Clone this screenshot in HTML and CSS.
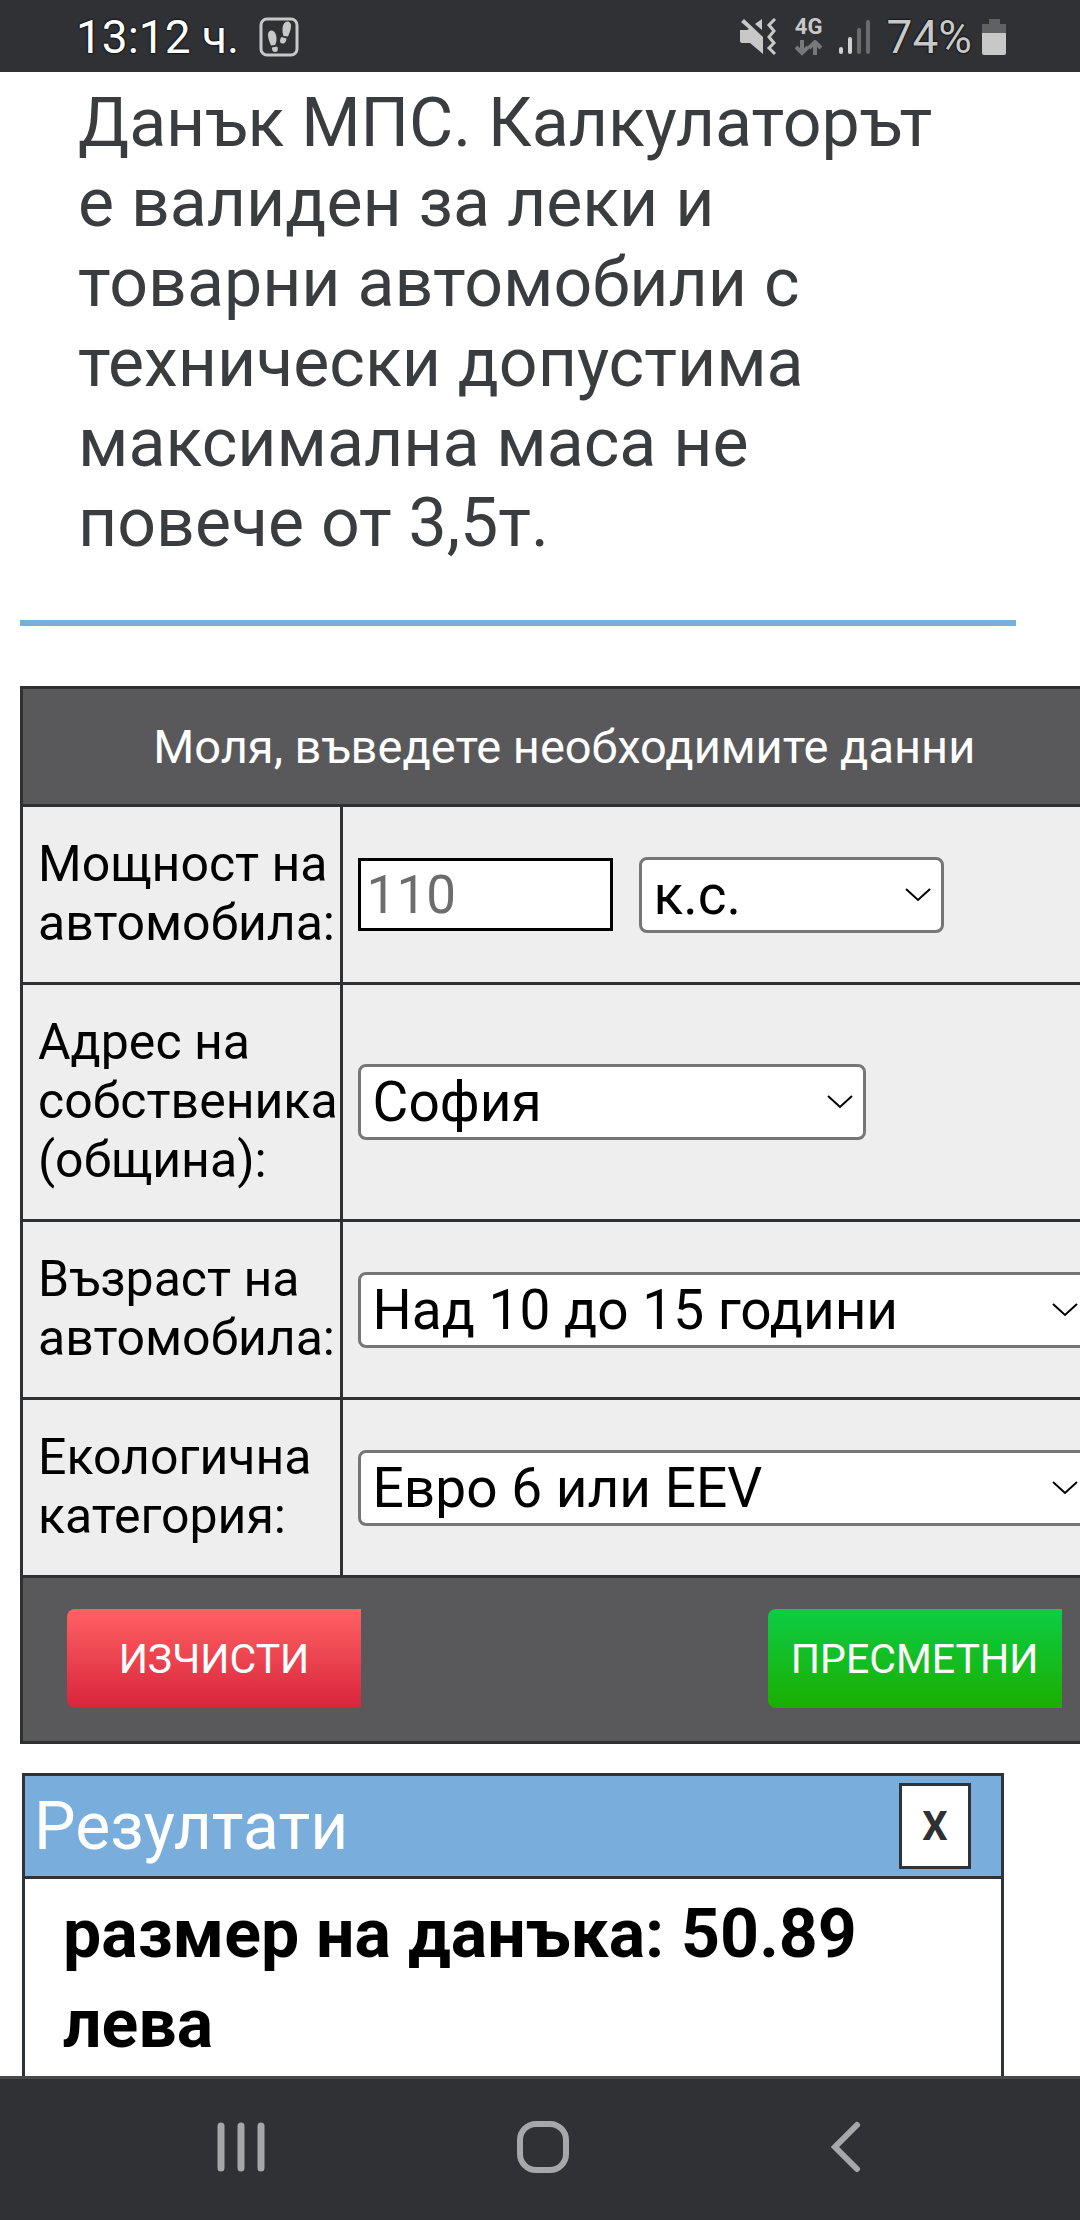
FILE: index.html
```html
<!DOCTYPE html>
<html lang="bg">
<head>
    <meta charset="UTF-8">
    <meta name="viewport" content="width=device-width, initial-scale=1.0">
    <title>Данък МПС</title>
    <link rel="stylesheet" href="styles.css">
</head>
<body>
    <header class="status-bar">
        <span class="clock">13:12 ч.</span>
        <svg class="steps-icon" width="40" height="40" viewBox="0 0 40 40">
            <rect x="2" y="2" width="36" height="36" rx="6" fill="none" stroke="#c8c8c8" stroke-width="3"/>
            <g fill="#c8c8c8">
                <path d="M9 18c0-3 1.500-4.500 3.500-4.500 3.200 0 5 4 5 8 0 3-.5 5-1.500 6.500l-4 .5c-1-3-3-6.500-3-10.500z"/>
                <path d="M13 30.500l5-1c1.500 2.500 1 5-1.500 5.500-2.500.4-3.800-2-3.500-4.500z"/>
                <path d="M32 9c0-3-1.500-4.500-3.500-4.500-3.200 0-5 4-5 8 0 3 .3 4.500 1 6.500l4.500.5c1-3 3-6.500 3-10.500z"/>
                <path d="M22.500 20l5 1.500c0 3-2 5.500-4.500 5-2.500-.5-2.500-4-.5-6.500z"/>
            </g>
        </svg>
        <div class="indicators">
            <svg width="38" height="38" viewBox="0 0 38 38">
                <path d="M1 12h7l2-1L2 4l3-3 19 18v17L11 25H3q-2 0-2-2z" fill="#c8c8c8"/>
                <path d="M23 1v11l-7-6z" fill="#c8c8c8"/>
                <path d="M36 1l-6 6 5 6-5 6 5 6-5 5 6 6" fill="none" stroke="#c8c8c8" stroke-width="3"/>
            </svg>
            <div class="network">
                <span>4G</span>
                <svg width="28" height="16" viewBox="0 0 28 16" fill="none" stroke="#77787a" stroke-width="4">
                    <path d="M7 0v13M1 7l6 6 6-6M20 15V3M14 8l6-6 6 6"/>
                </svg>
            </div>
            <svg width="32" height="36" viewBox="0 0 32 36" stroke-width="4" stroke-linecap="round">
                <path d="M2 30v3M11 20v13" stroke="#d0d0d0"/>
                <path d="M20 11v22M29 3v30" stroke="#6a6b6d"/>
            </svg>
            <span class="percent">74%</span>
            <svg width="24" height="36" viewBox="0 0 24 36">
                <path d="M7 0h11v5h6v9H0V5h7z" fill="#606163"/>
                <path d="M0 14h24v20q0 2-2 2H2q-2 0-2-2z" fill="#c8c8c8"/>
            </svg>
        </div>
    </header>

    <main class="content">
        <h1>Данък МПС. Калкулаторът е валиден за леки и товарни автомобили с технически допустима максимална маса не повече от 3,5т.</h1>

        <form>
            <table class="calculator">
                <thead>
                    <tr>
                        <th colspan="2">Моля, въведете необходимите данни</th>
                    </tr>
                </thead>
                <tbody>
                    <tr>
                        <td class="name"><label for="power">Мощност на<br>автомобила:</label></td>
                        <td>
                            <div class="fields">
                                <input type="text" id="power" class="power" placeholder="110">
                                <select class="unit" aria-label="Мерна единица">
                                    <option>к.с.</option>
                                    <option>kW</option>
                                </select>
                            </div>
                        </td>
                    </tr>
                    <tr>
                        <td class="name"><label for="city">Адрес на<br>собственика<br>(община):</label></td>
                        <td>
                            <select id="city" class="city">
                                <option>София</option>
                            </select>
                        </td>
                    </tr>
                    <tr>
                        <td class="name"><label for="age">Възраст на<br>автомобила:</label></td>
                        <td>
                            <select id="age" class="wide">
                                <option>Над 10 до 15 години</option>
                            </select>
                        </td>
                    </tr>
                    <tr>
                        <td class="name"><label for="eco">Екологична<br>категория:</label></td>
                        <td>
                            <select id="eco" class="wide">
                                <option>Евро 6 или EEV</option>
                            </select>
                        </td>
                    </tr>
                </tbody>
                <tfoot>
                    <tr>
                        <td colspan="2">
                            <div class="actions">
                                <button type="reset" class="clear">ИЗЧИСТИ</button>
                                <button type="button" class="calculate">ПРЕСМЕТНИ</button>
                            </div>
                        </td>
                    </tr>
                </tfoot>
            </table>
        </form>

        <section class="results">
            <div class="results-header">
                <h2>Резултати</h2>
                <button type="button" class="close">X</button>
            </div>
            <p>размер на данъка: 50.89 лева</p>
        </section>
    </main>

    <nav class="nav-bar">
        <button type="button" aria-label="Скорошни">
            <svg width="52" height="52" viewBox="0 0 52 52" stroke-width="7" stroke-linecap="round">
                <path d="M6 5v42M26 5v42M46 5v42"/>
            </svg>
        </button>
        <button type="button" aria-label="Начало">
            <svg width="52" height="52" viewBox="0 0 52 52" stroke-width="6">
                <rect x="3" y="3" width="46" height="46" rx="16"/>
            </svg>
        </button>
        <button type="button" aria-label="Назад">
            <svg width="52" height="52" viewBox="0 0 52 52" stroke-width="6" stroke-linecap="round">
                <path d="M38 4L16 26l22 22"/>
            </svg>
        </button>
    </nav>
</body>
</html>
```

FILE: styles.css
```css
* {
    box-sizing: border-box;
}
body {
    font-family: Roboto, sans-serif;
    margin: 0;
    height: 100vh;
    display: flex;
    flex-direction: column;
    background-color: #fff;
    color: #000;
}
button, input, select {
    font-family: inherit;
    margin: 0;
}
svg {
    display: block;
}

/* Status bar */
.status-bar {
    height: 72px;
    flex-shrink: 0;
    display: flex;
    align-items: center;
    padding: 2px 74px 0 76px;
    background-color: #303135;
    font-size: 46px;
    line-height: 54px;
    text-shadow: 0 0 2px #000, 0 0 2px #000;
}
.clock {
    color: #fff;
}
.steps-icon {
    margin-left: 20px;
}
.indicators {
    margin-left: auto;
    display: flex;
    align-items: center;
    gap: 16px;
}
.network {
    display: flex;
    flex-direction: column;
    align-items: center;
    gap: 4px;
    margin-left: 2px;
    color: #c8c8c8;
    font-size: 22px;
    font-weight: bold;
    line-height: 18px;
    text-shadow: none;
}
.percent {
    color: #c8c8c8;
    margin-right: -6px;
}

/* Page */
.content {
    flex: 1;
    min-height: 0;
    overflow: hidden;
    padding: 0 64px 0 20px;
}
h1 {
    margin: 0;
    padding: 11px 58px 57px;
    border-bottom: 6px solid #79addc;
    color: #3a3d3f;
    font-size: 68px;
    font-weight: normal;
    line-height: 80px;
}
.calculator {
    margin-top: 60px;
    border-collapse: collapse;
    background-color: #eee;
}
.calculator th, .calculator td {
    border: 3px solid #2f3032;
}
.calculator th {
    padding: 28px 0;
    background-color: #59595b;
    color: #fff;
    font-size: 47px;
    font-weight: normal;
    line-height: 59px;
}
.calculator td {
    padding: 0 15px;
}
.calculator .name {
    padding: 28px 2px 29px 15px;
    font-size: 50px;
    line-height: 59px;
    white-space: nowrap;
}
.fields {
    display: flex;
    align-items: center;
    gap: 26px;
}
.power {
    width: 255px;
    height: 73px;
    padding: 0 6px;
    border: 3px solid #000;
    border-radius: 0;
    background-color: #fff;
    font-size: 53px;
}
.power::placeholder {
    color: #6d6d6d;
    opacity: 1;
}
select {
    display: block;
    height: 76px;
    padding: 0 50px 0 12px;
    appearance: none;
    border: 3px solid #767676;
    border-radius: 8px;
    background: #fff url("data:image/svg+xml,%3Csvg xmlns='http://www.w3.org/2000/svg' width='26' height='16'%3E%3Cpath d='M1 2l12 11L25 2' fill='none' stroke='%23000' stroke-width='2'/%3E%3C/svg%3E") no-repeat right 10px center;
    color: #000;
    font-size: 55px;
}
.unit {
    width: 305px;
}
.city {
    width: 508px;
}
.wide {
    width: 733px;
}
.calculator tfoot td {
    padding: 31px 44px 33px;
    background-color: #59595b;
}
.actions {
    display: flex;
    justify-content: space-between;
}
.actions button {
    width: 294px;
    height: 99px;
    padding: 0;
    border: none;
    border-radius: 8px 0 0 8px;
    color: #fff;
    font-size: 41px;
}
.clear {
    background: linear-gradient(#ff6263, #d8253c);
}
.calculate {
    background: linear-gradient(#0ccd45, #1bae00);
}

/* Results */
.results {
    margin: 29px 12px 0 2px;
    border: 3px solid #2f3337;
    min-height: 400px;
}
.results-header {
    height: 103px;
    display: flex;
    align-items: center;
    justify-content: space-between;
    padding: 0 30px 0 9px;
    border-bottom: 3px solid #2f3337;
    background-color: #79addc;
}
.results h2 {
    margin: 0;
    color: #fff;
    font-size: 66px;
    font-weight: normal;
}
.close {
    width: 72px;
    height: 86px;
    padding: 0;
    border: 3px solid #2f3337;
    background-color: #fff;
    color: #2f3032;
    font-size: 40px;
    font-weight: bold;
}
.results p {
    margin: 0;
    padding: 10px 38px;
    font-size: 68px;
    font-weight: bold;
    line-height: 90px;
}

/* Navigation bar */
.nav-bar {
    height: 144px;
    flex-shrink: 0;
    display: grid;
    grid-template-columns: repeat(3, 1fr);
    padding: 0 84px 6px 90px;
    border-top: 3px solid #474849;
    background-color: #303135;
}
.nav-bar button {
    display: flex;
    align-items: center;
    justify-content: center;
    padding: 0;
    border: none;
    background: none;
}
.nav-bar svg {
    fill: none;
    stroke: #a6a7a9;
}
```
